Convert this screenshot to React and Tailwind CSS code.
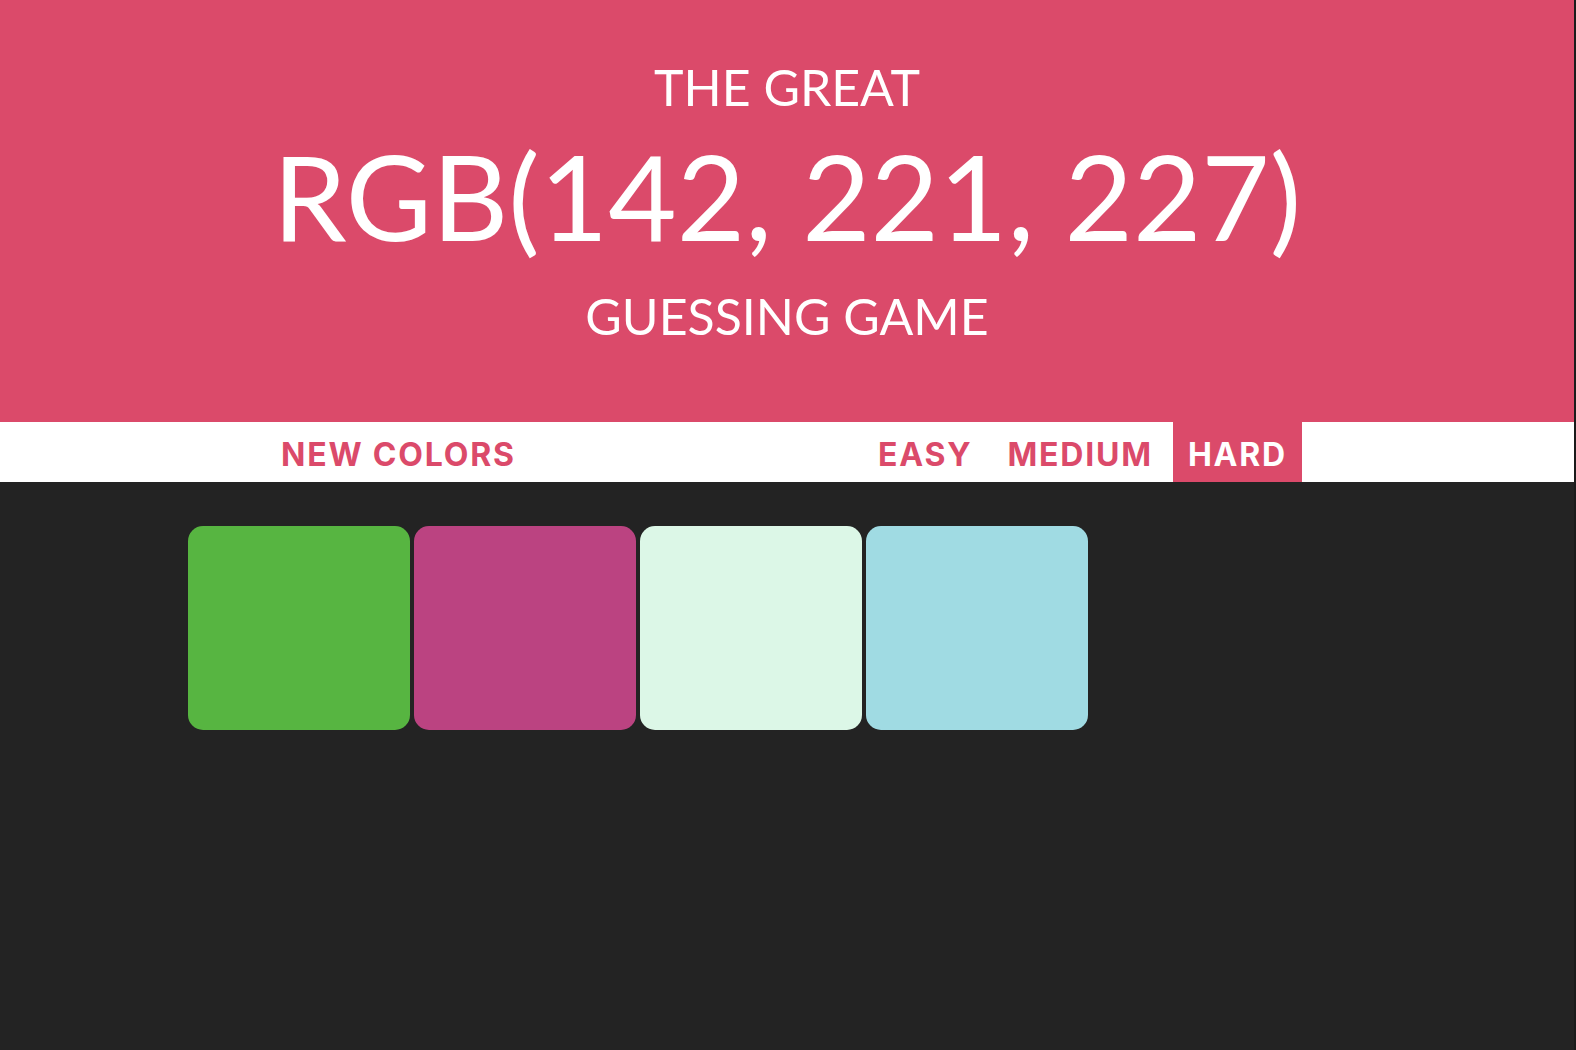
const squares = ['#57b541', '#bb4381', '#dcf7e7', '#a0dbe3'];

function NavButton({ label, active }) {
  return (
    <button
      className={`h-[60px] px-[15px] pt-[6px] text-[32px] leading-[54px] font-bold tracking-[1.8px] uppercase ${
        active ? 'bg-[#db4a6a] text-white' : 'bg-white text-[#db4a6a]'
      }`}
    >
      {label}
    </button>
  );
}

export default function App() {
  return (
    <div className="flex min-h-[1050px] bg-[#232323]">
      <div className="flex-1">
        {/* Header */}
        <div
          className="h-[422px] bg-[#db4a6a] text-white text-center pt-[62px]"
          style={{ fontFamily: 'Lato, "Open Sans", sans-serif' }}
        >
          <div className="text-[50px] leading-[50px]">THE GREAT</div>
          <div className="mt-[25px] text-[118px] leading-[118px]">RGB(142, 221, 227)</div>
          <div className="mt-[36px] text-[50px] leading-[50px]">GUESSING GAME</div>
        </div>

        {/* Controls */}
        <div
          className="h-[60px] bg-white flex items-stretch pl-[266px] pr-[272px]"
          style={{ fontFamily: 'Inter, Roboto, sans-serif' }}
        >
          <NavButton label="New Colors" />
          <div className="flex-1" />
          <div className="flex gap-[5px]">
            <NavButton label="Easy" />
            <NavButton label="Medium" />
            <NavButton label="Hard" active />
          </div>
        </div>

        {/* Squares */}
        <div className="flex gap-[4px] pl-[188px] pt-[44px]">
          {squares.map((c) => (
            <div key={c} className="w-[222px] h-[204px] rounded-[15px]" style={{ backgroundColor: c }} />
          ))}
        </div>
      </div>
      <div className="w-[2px] bg-[#1b1b1b]" />
    </div>
  );
}
